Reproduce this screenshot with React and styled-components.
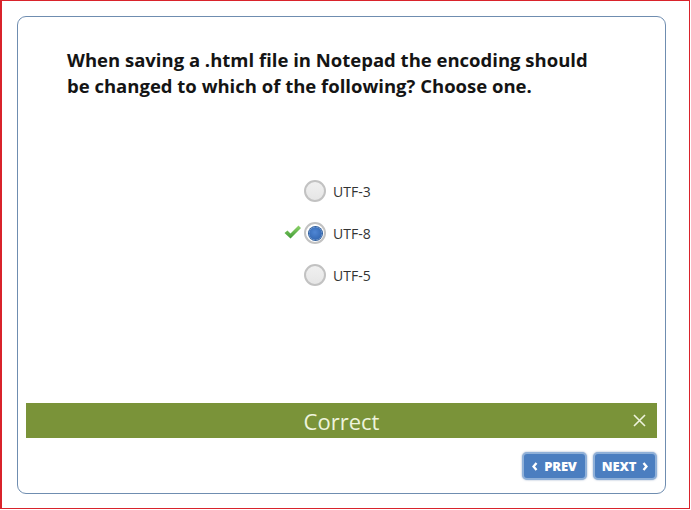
import React from "react";
import styled, { createGlobalStyle } from "styled-components";

const GlobalStyle = createGlobalStyle`
  html, body {
    margin: 0;
    padding: 0;
    background: #ffffff;
  }
  body {
    font-family: "Open Sans", "Liberation Sans", sans-serif;
  }
`;

const Frame = styled.div`
  box-sizing: border-box;
  width: 690px;
  height: 509px;
  border: 1px solid #d9232b;
  border-left-width: 2px;
  padding: 15px 0 0 15px;
`;

const Card = styled.div`
  box-sizing: border-box;
  width: 649px;
  height: 478px;
  border: 1px solid #6f8db0;
  border-radius: 9px;
  padding: 0 8px 13px;
  display: flex;
  flex-direction: column;
`;

const Question = styled.h1`
  margin: 30px 0 0;
  padding-left: 41px;
  font-size: 18.5px;
  line-height: 26px;
  font-weight: 700;
  color: #141414;
`;

const Options = styled.div`
  margin: 81px 0 0 278px;
  display: flex;
  flex-direction: column;
  gap: 20px;
`;

const Option = styled.label`
  position: relative;
  display: flex;
  align-items: center;
  gap: 7px;
  height: 22px;
  font-size: 14px;
  color: #333333;
`;

const Radio = styled.span`
  box-sizing: border-box;
  width: 22px;
  height: 22px;
  border-radius: 50%;
  border: 2px solid #c2c2c2;
  background: ${({ $checked }) =>
    $checked ? "#ffffff" : "linear-gradient(#f0f0f0, #e6e6e6)"};
  display: flex;
  align-items: center;
  justify-content: center;
`;

const Dot = styled.span`
  width: 13px;
  height: 13px;
  border-radius: 50%;
  background: radial-gradient(circle at 45% 40%, #4f86d4, #2a5ea8);
  box-shadow: 0 0 0 1px #2f5f9e;
`;

const Tick = styled.svg`
  position: absolute;
  left: -20px;
  top: 3px;
`;

const Feedback = styled.div`
  margin-top: auto;
  height: 35px;
  background: #7a9339;
  position: relative;
  display: flex;
  align-items: center;
  justify-content: center;
  font-size: 22px;
  color: #eef3dd;
`;

const Close = styled.svg`
  position: absolute;
  right: 11px;
  top: 11px;
`;

const Nav = styled.div`
  margin-top: 14px;
  display: flex;
  justify-content: flex-end;
  gap: 6px;
`;

const NavButton = styled.button`
  box-sizing: border-box;
  width: ${({ $w }) => $w}px;
  height: 28px;
  border: 2px solid #8fb0d8;
  border-radius: 5px;
  background: #4b7ec0;
  box-shadow: 0 0 2px rgba(40, 80, 140, 0.5);
  color: #ffffff;
  font-family: "Open Sans", "Liberation Sans", sans-serif;
  font-weight: 800;
  font-size: 13px;
  letter-spacing: -0.2px;
  display: flex;
  align-items: center;
  justify-content: center;
  gap: 6px;
  padding: 0;
`;

const Chevron = ({ dir }) => (
  <svg width="6" height="9" viewBox="0 0 6 9">
    <path
      d={dir === "left" ? "M4.5 1 L1.5 4.5 L4.5 8" : "M1.5 1 L4.5 4.5 L1.5 8"}
      fill="none"
      stroke="#ffffff"
      strokeWidth="2.4"
    />
  </svg>
);

const options = [
  { label: "UTF-3" },
  { label: "UTF-8", checked: true },
  { label: "UTF-5" },
];

export default function App() {
  return (
    <>
      <GlobalStyle />
      <Frame>
        <Card>
          <Question>
            When saving a .html file in Notepad the encoding should
            <br />
            be changed to which of the following? Choose one.
          </Question>
          <Options>
            {options.map((o) => (
              <Option key={o.label}>
                {o.checked && (
                  <Tick width="18" height="15" viewBox="0 0 18 15">
                    <defs>
                      <linearGradient id="tk" x1="0" y1="0" x2="0" y2="1">
                        <stop offset="0" stopColor="#8fd46a" />
                        <stop offset="1" stopColor="#3f9a36" />
                      </linearGradient>
                    </defs>
                    <path
                      d="M0.5 8 L3.5 5.5 L6.5 8.5 L14.5 0.5 L17 3 L6.5 13.5 Z"
                      fill="url(#tk)"
                    />
                  </Tick>
                )}
                <Radio $checked={o.checked}>{o.checked && <Dot />}</Radio>
                {o.label}
              </Option>
            ))}
          </Options>
          <Feedback>
            Correct
            <Close width="13" height="13" viewBox="0 0 13 13">
              <path d="M1 1 L12 12 M12 1 L1 12" stroke="#eef3dd" strokeWidth="1.6" />
            </Close>
          </Feedback>
          <Nav>
            <NavButton $w={65}>
              <Chevron dir="left" />
              PREV
            </NavButton>
            <NavButton $w={64}>
              NEXT
              <Chevron dir="right" />
            </NavButton>
          </Nav>
        </Card>
      </Frame>
    </>
  );
}
